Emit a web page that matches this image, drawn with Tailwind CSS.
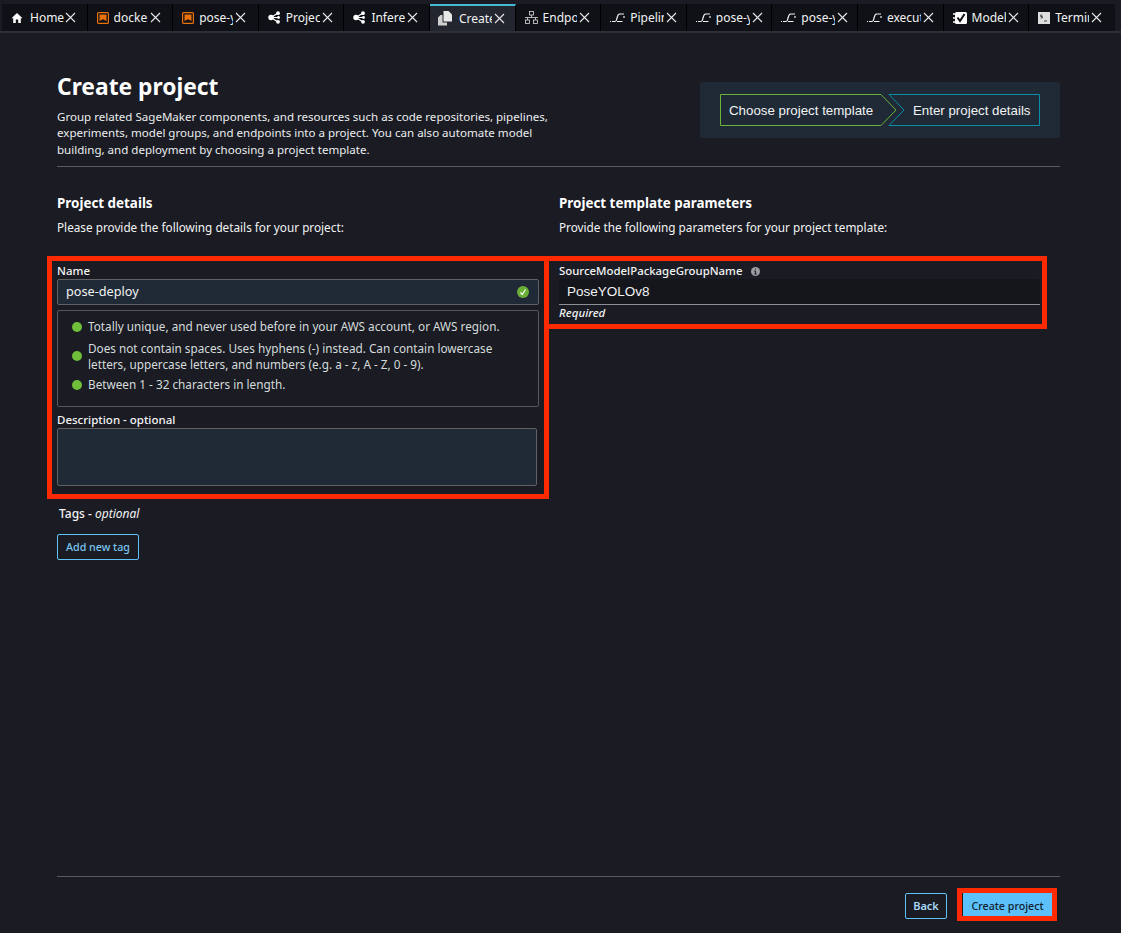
<!DOCTYPE html>
<html lang="en">
<head>
<meta charset="utf-8">
<script src="https://cdn.jsdelivr.net/npm/@tailwindcss/browser@4"></script>
<title>Create project</title>
</head>
<body class="bg-[#1a1b23] font-['Noto_Sans',sans-serif] text-[11.75px] text-[#f2f3f3]">
<div class="relative flex h-[933px] w-[1121px] flex-col overflow-hidden">

  <!-- tab strip -->
  <div class="flex h-[33px] shrink-0 border-b-2 border-[#2e3039] bg-[#1a1b23] pt-[4px] pl-[2px] text-[12px]">
    <div class="flex h-[27px] w-[85.6px] items-center border-r border-black bg-[#0f1116] pl-[9px]">
      <svg class="mr-[7px] h-[12px] w-[12px] shrink-0" viewBox="0 0 12 12"><path fill="#fff" d="M6 1 0.5 6.2h1.7V11h2.6V7.6h2.4V11h2.6V6.2h1.7z"/></svg>
      <span class="w-[34px] overflow-hidden whitespace-nowrap">Home</span>
      <svg class="ml-[1px] h-[11px] w-[11px] shrink-0" viewBox="0 0 11 11"><path stroke="#e8e8e8" stroke-width="1.1" d="M1 1l9 9M10 1l-9 9"/></svg>
    </div>
    <div class="flex h-[27px] w-[85.6px] items-center border-r border-black bg-[#0f1116] pl-[9px]">
      <svg class="mr-[5px] h-[12px] w-[12px] shrink-0" viewBox="0 0 12 12"><rect x=".6" y=".6" width="10.8" height="10.8" rx="1" fill="none" stroke="#e8710a" stroke-width="1.2"/><path fill="#e8710a" d="M2.500 2.500h7v6.500L6 7.200 2.500 9z"/></svg>
      <span class="w-[34px] overflow-hidden whitespace-nowrap">docker</span>
      <svg class="ml-[2px] h-[11px] w-[11px] shrink-0" viewBox="0 0 11 11"><path stroke="#e8e8e8" stroke-width="1.1" d="M1 1l9 9M10 1l-9 9"/></svg>
    </div>
    <div class="flex h-[27px] w-[85.6px] items-center border-r border-black bg-[#0f1116] pl-[9px]">
      <svg class="mr-[5px] h-[12px] w-[12px] shrink-0" viewBox="0 0 12 12"><rect x=".6" y=".6" width="10.8" height="10.8" rx="1" fill="none" stroke="#e8710a" stroke-width="1.2"/><path fill="#e8710a" d="M2.500 2.500h7v6.500L6 7.200 2.500 9z"/></svg>
      <span class="w-[34px] overflow-hidden whitespace-nowrap">pose-yolo</span>
      <svg class="ml-[2px] h-[11px] w-[11px] shrink-0" viewBox="0 0 11 11"><path stroke="#e8e8e8" stroke-width="1.1" d="M1 1l9 9M10 1l-9 9"/></svg>
    </div>
    <div class="flex h-[27px] w-[85.6px] items-center border-r border-black bg-[#0f1116] pl-[9px]">
      <svg class="mr-[5px] h-[13px] w-[13px] shrink-0" viewBox="0 0 13 13"><path stroke="#fff" stroke-width="1.2" d="M3 6.500 10 2M3 6.500h7M3 6.500l7 4.500"/><circle cx="3" cy="6.500" r="2.700" fill="#fff"/><circle cx="10" cy="2.200" r="1.900" fill="#fff"/><circle cx="10.500" cy="6.500" r="1.400" fill="#fff"/><circle cx="10" cy="10.800" r="1.900" fill="#fff"/></svg>
      <span class="w-[34px] overflow-hidden whitespace-nowrap">Project</span>
      <svg class="ml-[2px] h-[11px] w-[11px] shrink-0" viewBox="0 0 11 11"><path stroke="#e8e8e8" stroke-width="1.1" d="M1 1l9 9M10 1l-9 9"/></svg>
    </div>
    <div class="flex h-[27px] w-[85.6px] items-center border-r border-black bg-[#0f1116] pl-[9px]">
      <svg class="mr-[5px] h-[13px] w-[13px] shrink-0" viewBox="0 0 13 13"><path stroke="#fff" stroke-width="1.2" d="M3 6.500 10 2M3 6.500h7M3 6.500l7 4.500"/><circle cx="3" cy="6.500" r="2.700" fill="#fff"/><circle cx="10" cy="2.200" r="1.900" fill="#fff"/><circle cx="10.500" cy="6.500" r="1.400" fill="#fff"/><circle cx="10" cy="10.800" r="1.900" fill="#fff"/></svg>
      <span class="w-[34px] overflow-hidden whitespace-nowrap">Inference</span>
      <svg class="ml-[2px] h-[11px] w-[11px] shrink-0" viewBox="0 0 11 11"><path stroke="#e8e8e8" stroke-width="1.1" d="M1 1l9 9M10 1l-9 9"/></svg>
    </div>
    <div class="flex h-[27px] w-[85.6px] items-center border-t-2 border-r border-t-[#44b9d6] border-r-black bg-[#23262f] pl-[8px]">
      <svg class="mr-[7px] h-[15px] w-[14px] shrink-0" viewBox="0 0 14 15"><path fill="#cfcfcf" d="M0 6.500 2.500 4H4.500V11.500H9V14.500H0z"/><path fill="#e8e8e8" d="M5.500 0H10.500L14 3.500V10.500H5.500z"/></svg>
      <span class="w-[33px] overflow-hidden whitespace-nowrap">Create</span>
      <svg class="ml-[2px] h-[11px] w-[11px] shrink-0" viewBox="0 0 11 11"><path stroke="#e8e8e8" stroke-width="1.1" d="M1 1l9 9M10 1l-9 9"/></svg>
    </div>
    <div class="flex h-[27px] w-[85.6px] items-center border-r border-black bg-[#0f1116] pl-[9px]">
      <svg class="mr-[5px] h-[13px] w-[13px] shrink-0" viewBox="0 0 13 13" fill="none" stroke="#ddd" stroke-width=".8"><rect x="4.500" y=".5" width="4" height="3.500"/><rect x=".5" y="9" width="4" height="3.500"/><rect x="8.500" y="9" width="4" height="3.500"/><path d="M0 6.500h13M6.500 4v2.500M2.500 6.500V9M10.500 6.500V9"/></svg>
      <span class="w-[34px] overflow-hidden whitespace-nowrap">Endpoint</span>
      <svg class="ml-[2px] h-[11px] w-[11px] shrink-0" viewBox="0 0 11 11"><path stroke="#e8e8e8" stroke-width="1.1" d="M1 1l9 9M10 1l-9 9"/></svg>
    </div>
    <div class="flex h-[27px] w-[85.6px] items-center border-r border-black bg-[#0f1116] pl-[9px]">
      <svg class="mr-[5px] h-[10px] w-[15px] shrink-0" viewBox="0 0 15 10" fill="none" stroke="#f2f2f2" stroke-width="1.2"><path d="M0 8.500h1M2 8.500h3c1.500 0 1.500-1.500 2-3.500s1-4 2.500-4H14M7 8.500h5.500M14 3v2"/></svg>
      <span class="w-[34px] overflow-hidden whitespace-nowrap">Pipeline</span>
      <svg class="ml-[2px] h-[11px] w-[11px] shrink-0" viewBox="0 0 11 11"><path stroke="#e8e8e8" stroke-width="1.1" d="M1 1l9 9M10 1l-9 9"/></svg>
    </div>
    <div class="flex h-[27px] w-[85.6px] items-center border-r border-black bg-[#0f1116] pl-[9px]">
      <svg class="mr-[5px] h-[10px] w-[15px] shrink-0" viewBox="0 0 15 10" fill="none" stroke="#f2f2f2" stroke-width="1.2"><path d="M0 8.500h1M2 8.500h3c1.500 0 1.500-1.500 2-3.500s1-4 2.500-4H14M7 8.500h5.500M14 3v2"/></svg>
      <span class="w-[34px] overflow-hidden whitespace-nowrap">pose-yolo</span>
      <svg class="ml-[2px] h-[11px] w-[11px] shrink-0" viewBox="0 0 11 11"><path stroke="#e8e8e8" stroke-width="1.1" d="M1 1l9 9M10 1l-9 9"/></svg>
    </div>
    <div class="flex h-[27px] w-[85.6px] items-center border-r border-black bg-[#0f1116] pl-[9px]">
      <svg class="mr-[5px] h-[10px] w-[15px] shrink-0" viewBox="0 0 15 10" fill="none" stroke="#f2f2f2" stroke-width="1.2"><path d="M0 8.500h1M2 8.500h3c1.500 0 1.500-1.500 2-3.500s1-4 2.500-4H14M7 8.500h5.500M14 3v2"/></svg>
      <span class="w-[34px] overflow-hidden whitespace-nowrap">pose-yolo</span>
      <svg class="ml-[2px] h-[11px] w-[11px] shrink-0" viewBox="0 0 11 11"><path stroke="#e8e8e8" stroke-width="1.1" d="M1 1l9 9M10 1l-9 9"/></svg>
    </div>
    <div class="flex h-[27px] w-[85.6px] items-center border-r border-black bg-[#0f1116] pl-[9px]">
      <svg class="mr-[5px] h-[10px] w-[15px] shrink-0" viewBox="0 0 15 10" fill="none" stroke="#f2f2f2" stroke-width="1.2"><path d="M0 8.500h1M2 8.500h3c1.500 0 1.500-1.500 2-3.500s1-4 2.500-4H14M7 8.500h5.500M14 3v2"/></svg>
      <span class="w-[34px] overflow-hidden whitespace-nowrap">execution</span>
      <svg class="ml-[2px] h-[11px] w-[11px] shrink-0" viewBox="0 0 11 11"><path stroke="#e8e8e8" stroke-width="1.1" d="M1 1l9 9M10 1l-9 9"/></svg>
    </div>
    <div class="flex h-[27px] w-[85.6px] items-center border-r border-black bg-[#0f1116] pl-[9px]">
      <svg class="mr-[5px] h-[14px] w-[14px] shrink-0" viewBox="0 0 14 14"><rect x="2" y="1" width="12" height="12" rx="1.500" fill="#fff"/><path d="M4.500 6.500 7 10l4.500-7" fill="none" stroke="#0f1116" stroke-width="2"/><path d="M0 3h2M0 7h2M0 11h2" stroke="#fff" stroke-width="1.500"/></svg>
      <span class="w-[34px] overflow-hidden whitespace-nowrap">Model</span>
      <svg class="ml-[2px] h-[11px] w-[11px] shrink-0" viewBox="0 0 11 11"><path stroke="#e8e8e8" stroke-width="1.1" d="M1 1l9 9M10 1l-9 9"/></svg>
    </div>
    <div class="flex h-[27px] w-[85.6px] items-center bg-[#0f1116] pl-[9px]">
      <svg class="mr-[5px] h-[12px] w-[12px] shrink-0" viewBox="0 0 12 12"><rect width="12" height="12" fill="#dedede"/><path d="M4.300 3H2.700v1.500h1.600V6H2.700M6 9h3" fill="none" stroke="#222" stroke-width=".8"/></svg>
      <span class="w-[34px] overflow-hidden whitespace-nowrap">Terminal</span>
      <svg class="ml-[2px] h-[11px] w-[11px] shrink-0" viewBox="0 0 11 11"><path stroke="#e8e8e8" stroke-width="1.1" d="M1 1l9 9M10 1l-9 9"/></svg>
    </div>
  </div>

  <!-- page -->
  <main class="flex min-h-0 flex-1 flex-col pt-[38px] pr-[61px] pl-[57px]">
    <header class="flex h-[96px] shrink-0 items-start justify-between border-b border-[#5a5b5f]">
      <div class="w-[510px]">
        <h1 class="text-[22.8px] leading-[31px] font-bold text-white">Create project</h1>
        <p class="mt-[7px] text-[11.55px] leading-[16.300px] text-[#eaeded]">Group related SageMaker components, and resources such as code repositories, pipelines,<br>experiments, model groups, and endpoints into a project. You can also automate model<br>building, and deployment by choosing a project template.</p>
      </div>
      <div class="relative mt-[11px] flex h-[56px] w-[360px] items-center rounded-[2px] bg-[#1f2a36] pt-[1px] font-['Liberation_Sans',sans-serif] text-[13.3px] text-[#f2f3f3]">
        <svg class="absolute inset-0 h-[56px] w-[360px]" viewBox="0 0 360 56" fill="none">
          <path d="M20.500 12.500H181L196 28 181 43.500H20.500z" stroke="#6cb33a"/>
          <path d="M189 12.500H339.500V43.500H189L204 28z" stroke="#0a8fa8"/>
        </svg>
        <span class="relative ml-[29px] w-[184px] whitespace-nowrap">Choose project template</span>
        <span class="relative whitespace-nowrap">Enter project details</span>
      </div>
    </header>

    <div class="mt-[26px] grid shrink-0 grid-cols-[482px_481px] gap-x-[20px]">
      <section>
        <h2 class="text-[13.4px] leading-[20px] font-bold text-white">Project details</h2>
        <p class="mt-[6px] leading-[16px]">Please provide the following details for your project:</p>

        <div class="mt-[28px] text-[11.5px] leading-[16px] font-medium">Name</div>
        <div class="flex h-[26px] items-center justify-between rounded-[2px] border border-[#5f6165] bg-[#1f2a36] pr-[9px] pl-[8px]">
          <span class="text-[12.7px] text-[#f2f3f3]">pose-deploy</span>
          <svg class="h-[12px] w-[12px]" viewBox="0 0 12 12"><circle cx="6" cy="6" r="6" fill="#6aaf35"/><path d="M3.500 6.500 5.300 8.500 8.500 3.500" fill="none" stroke="#fff" stroke-width="1.200"/></svg>
        </div>
        <div class="mt-[5px] h-[97px] rounded-[2px] border border-[#55575b] pt-[7px] pl-[14px] text-[#d5dbdb]">
          <div class="flex h-[17px] items-center gap-[6px]">
            <span class="h-[10px] w-[10px] shrink-0 rounded-full bg-[#6fbf3a]"></span>
            <span>Totally unique, and never used before in your AWS account, or AWS region.</span>
          </div>
          <div class="mt-[4px] flex h-[33px] items-center gap-[6px]">
            <span class="h-[10px] w-[10px] shrink-0 rounded-full bg-[#6fbf3a]"></span>
            <span class="leading-[16px]">Does not contain spaces. Uses hyphens (-) instead. Can contain lowercase<br>letters, uppercase letters, and numbers (e.g. a - z, A - Z, 0 - 9).</span>
          </div>
          <div class="mt-[4px] flex h-[17px] items-center gap-[6px]">
            <span class="h-[10px] w-[10px] shrink-0 rounded-full bg-[#6fbf3a]"></span>
            <span>Between 1 - 32 characters in length.</span>
          </div>
        </div>

        <div class="mt-[5px] text-[11.5px] leading-[16px] font-medium">Description - optional</div>
        <div class="h-[58px] w-[480px] rounded-[2px] border border-[#5f6165] bg-[#1f2a36]"></div>

        <div class="mt-[20px] ml-[2px] text-[12px] leading-[16px] font-medium">Tags - <em class="font-normal">optional</em></div>
        <button class="mt-[12px] flex h-[26px] w-[82px] items-center justify-center rounded-[2px] border border-[#5fc3f5] text-[10.7px] font-medium text-[#7cc4ee]">Add new tag</button>
      </section>

      <section>
        <h2 class="text-[13.4px] leading-[20px] font-bold text-white">Project template parameters</h2>
        <p class="mt-[6px] leading-[16px]">Provide the following parameters for your project template:</p>

        <div class="mt-[28px] flex items-center gap-[9px] text-[11.4px] leading-[16px] font-medium">
          SourceModelPackageGroupName
          <svg class="h-[9px] w-[9px]" viewBox="0 0 9 9"><circle cx="4.500" cy="4.500" r="4.500" fill="#9a9ca0"/><path d="M4.500 1.500v1M3.500 4h1v3M3.300 7h2.400" stroke="#1a1b23" stroke-width="1"/></svg>
        </div>
        <div class="flex h-[26px] items-center rounded-t-[3px] border-b border-[#8d8f96] bg-[#14161b] pt-[1px] pl-[8px] font-['Liberation_Sans',sans-serif] text-[13.5px] text-[#f2f3f3]">PoseYOLOv8</div>
        <div class="text-[11.5px] leading-[15px] font-medium italic">Required</div>
      </section>
    </div>

    <div class="flex-1"></div>

    <footer class="flex h-[57px] shrink-0 items-start justify-end gap-[15px] border-t border-[#5a5b5f] pt-[16px] pr-[8px]">
      <button class="flex h-[26px] w-[42px] items-center justify-center rounded-[2px] border border-[#5fc3f5] text-[11px] font-semibold text-[#a8d8f5]">Back</button>
      <button class="flex h-[26px] w-[90px] items-center justify-center border-l border-[#1a1b23] bg-[#5cc0fa] text-[10.7px] font-medium text-[#11202e]">Create project</button>
    </footer>
  </main>

  <!-- red annotation boxes -->
  <div class="pointer-events-none absolute top-[256px] left-[544px] h-[73px] w-[503px] border-[5px] border-[#ff2a00]"></div>
  <div class="pointer-events-none absolute top-[256px] left-[47px] h-[243px] w-[502px] border-[5px] border-[#ff2a00]"></div>
  <div class="pointer-events-none absolute top-[888px] left-[957px] h-[33px] w-[100px] border-[5px] border-[#ff2a00]"></div>
</div>
</body>
</html>
